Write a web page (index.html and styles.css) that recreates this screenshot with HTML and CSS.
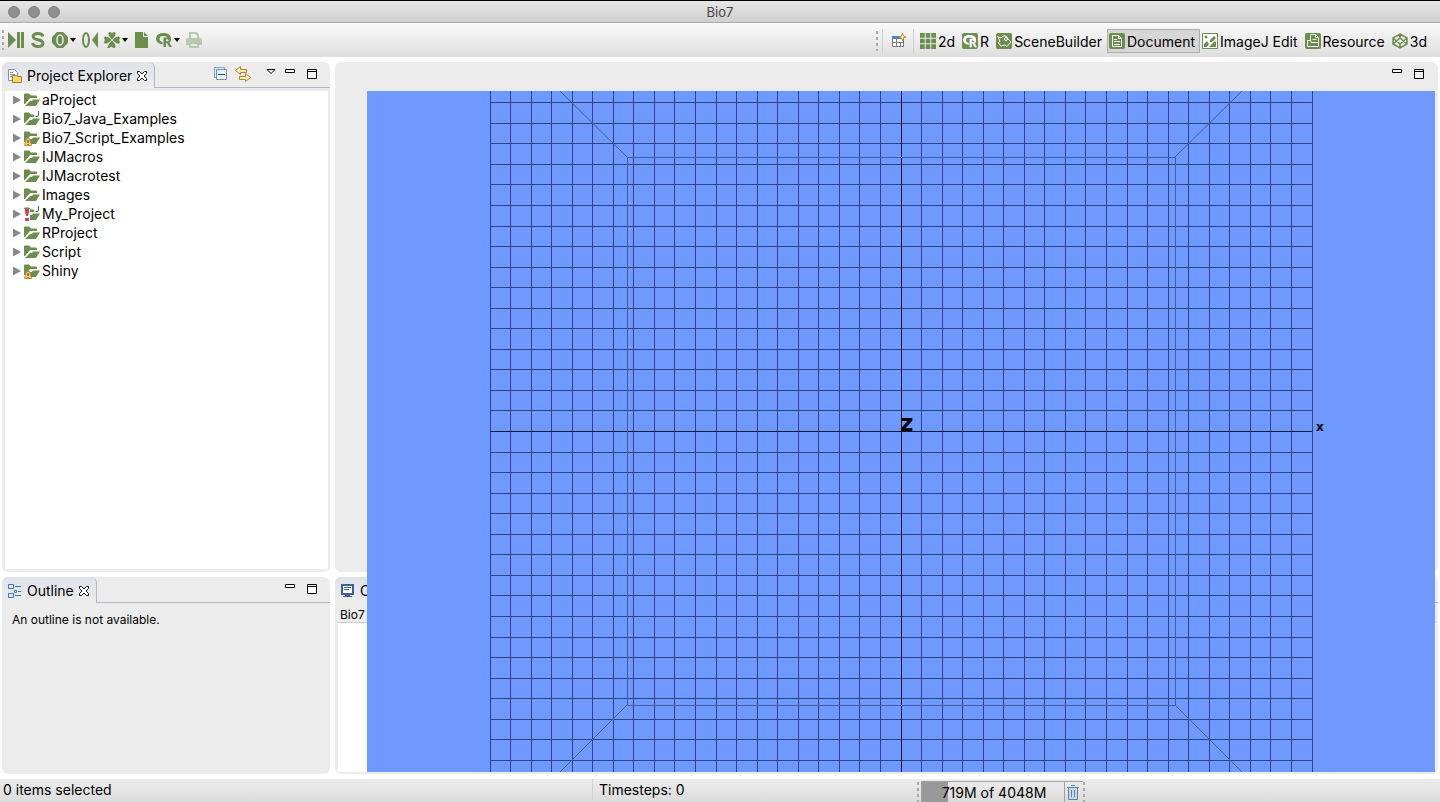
FILE: index.html
```
<!DOCTYPE html>
<html lang="en">
<head>
    <meta charset="UTF-8">
    <meta name="viewport" content="width=device-width, initial-scale=1.0">
    <title>Bio7</title>
    <link rel="stylesheet" href="styles.css">
</head>
<body>

    <!-- shared icons -->
    <svg class="sprite" aria-hidden="true">
        <symbol id="folder" viewBox="0 0 16 16">
            <path fill="#6b8e4e" d="M0 2.500q0-1 1-1h4l2 2h5q1 0 1 1V6H6L1 12H0z"/>
            <path fill="#6b8e4e" d="M1 14l5-5h2l1-1.500h7L12 14z"/>
        </symbol>
        <symbol id="twisty" viewBox="0 0 8 10">
            <path fill="#888" d="M0 .5L8 5 0 9.500z"/>
        </symbol>
        <symbol id="warn" viewBox="0 0 8 8">
            <path fill="#f8d080" stroke="#c98a2b" d="M2.500.5h3l2 7h-7z"/>
            <path stroke="#222" d="M4 2v3M4 6v1"/>
        </symbol>
        <symbol id="close" viewBox="0 0 12 12">
            <path fill="#fff" stroke="#111" d="M1.500 1.500h2L6 4l2.500-2.500h2v2L8 6l2.500 2.500v2h-2L6 8l-2.500 2.500h-2v-2L4 6 1.500 3.500z"/>
        </symbol>
        <symbol id="min" viewBox="0 0 12 12">
            <path fill="#fff" stroke="#000" d="M1.500 1.500h9v3h-9z"/>
        </symbol>
        <symbol id="max" viewBox="0 0 12 12">
            <path fill="#fff" stroke="#000" d="M1.500 1.500h9v9h-9zM1 3.500h10"/>
        </symbol>
        <symbol id="rlogo" viewBox="0 0 16 16">
            <path fill="currentColor" fill-rule="evenodd" d="M7.500 1C12 1 15 3.200 15 6.500c0 1-.3 1.800-.8 2.500L12 7.500c0-2-1.500-3.500-4.500-3.500S3.500 5.200 3.500 7c0 1.500 1 2.500 3 3v2.500C3 12 0 9.800 0 6.700 0 3.200 3 1 7.500 1z"/>
            <path fill="currentColor" fill-rule="evenodd" d="M7.500 5.500h4.500c2 0 3 1 3 2.600 0 1.300-.6 2-1.700 2.400L16 15h-2.800l-2.200-4h-1v4H7.500zM10 7.300v2h1.700q1 0 1-1t-1-1z"/>
        </symbol>
    </svg>

    <header class="titlebar">
        <div class="lights"><span></span><span></span><span></span></div>
        <h1>Bio7</h1>
    </header>

    <div class="toolbar">
        <div class="tools">
            <i class="grip"></i>
            <button class="tool" aria-label="Run"><svg viewBox="0 0 16 16"><path fill="currentColor" d="M0 0l8 8-8 8zM9 0h3v16H9zM13 0h3v16h-3z"/></svg></button>
            <button class="tool" aria-label="Setup"><svg viewBox="0 0 16 16"><path fill="none" stroke="currentColor" stroke-width="3" d="M13 4.500C12.500 2.500 11 1.500 8 1.500S3.200 2.800 3.200 4.500C3.200 9 13 6.500 13 11.200c0 2.200-2 3.300-5 3.300s-5-1.200-5.500-3.500"/></svg></button>
            <button class="tool" aria-label="Counter"><svg viewBox="0 0 16 16"><path fill="currentColor" d="M5 0h6l5 5v6l-5 5H5l-5-5V5z"/><ellipse cx="8" cy="8" rx="3" ry="5" fill="none" stroke="#eee" stroke-width="1.500"/></svg></button>
            <button class="drop" aria-label="Counter options"></button>
            <button class="tool" aria-label="Reset"><svg viewBox="0 0 16 16"><ellipse cx="4" cy="8" rx="3" ry="7" fill="none" stroke="currentColor" stroke-width="2"/><path fill="currentColor" d="M16 0v16l-6-8z"/></svg></button>
            <button class="tool" aria-label="Random"><svg viewBox="0 0 16 16"><g fill="currentColor"><path d="M8 7.500L5 4Q3.500 0 6 0q1.500 0 2 1.500Q8.500 0 10 0q2.500 0 1 4zM7.500 8L4 11Q0 12.500 0 10q0-1.500 1.500-2Q0 7.500 0 6q0-2.500 4-1zM8.500 8l3.500-3q4-1.500 4 1 0 1.500-1.500 2 1.500.5 1.500 2 0 2.500-4 1zM8 8.500l3 3.500q1.500 4-1 4-1.500 0-2-1.500L5 16H3l2-4z"/></g></svg></button>
            <button class="drop" aria-label="Random options"></button>
            <button class="tool" aria-label="New document"><svg viewBox="0 0 16 16"><path fill="currentColor" d="M1 0h8v5h5v11H1zM10 0l4 4h-4z"/></svg></button>
            <button class="tool" aria-label="R"><svg viewBox="0 0 16 16"><use href="#rlogo"/></svg></button>
            <button class="drop" aria-label="R options"></button>
            <button class="tool" aria-label="Print" disabled><svg viewBox="0 0 16 16"><path fill="none" stroke="currentColor" stroke-width="2" d="M4 7V1h6l2 2v4M4 11h8v4H4z"/><path fill="currentColor" d="M2 6h12q2 0 2 2v5h-3v-3H3v3H0V8q0-2 2-2z"/></svg></button>
        </div>

        <nav class="perspectives">
            <i class="grip"></i>
            <i class="divider"></i>
            <button class="open-persp" aria-label="Open perspective"><svg viewBox="0 0 16 16"><path fill="#fff" stroke="#777" d="M1.500 3.500h11v10h-11zM5.500 6v7M1.500 9.500h11M9.500 9.500v4"/><path fill="#4b83c4" d="M1 3h9v3H1z"/><path fill="#fff3c8" stroke="#b8862f" d="M11.500.5l1 2.500 2.500 1-2.500 1-1 2.500-1-2.500L8 4l2.500-1z"/></svg></button>
            <i class="divider"></i>
            <button class="persp"><svg viewBox="0 0 16 16"><path fill="currentColor" d="M0 0h4.700v4.700H0zM5.700 0h4.600v4.700H5.700zM11.300 0H16v4.700h-4.700zM0 5.700h4.700v4.600H0zM5.700 5.700h4.600v4.600H5.700zM11.300 5.700H16v4.600h-4.700zM0 11.300h4.700V16H0zM5.700 11.300h4.600V16H5.700zM11.300 11.300H16V16h-4.700z"/></svg>2d</button>
            <button class="persp"><svg viewBox="0 0 16 16"><rect width="16" height="16" rx="2" fill="currentColor"/><svg class="onGreen" x="1" y="1" width="14" height="14" viewBox="0 0 16 16"><use href="#rlogo"/></svg></svg>R</button>
            <button class="persp"><svg viewBox="0 0 16 16"><rect width="16" height="16" rx="2" fill="currentColor"/><path fill="none" stroke="#fff" d="M1.500 3.500L5 5l3-2.500L11 4l1 2 3 3-4 4.500-2-1.500-4 1-2.500-3L4 8z"/><circle cx="10" cy="6" r="1.500" fill="none" stroke="#fff"/></svg>SceneBuilder</button>
            <button class="persp active"><svg viewBox="0 0 16 16"><rect width="16" height="16" rx="2" fill="currentColor"/><path fill="none" stroke="#fff" d="M3.500 2.500h6l3 3v8h-9zM9.500 2.500v3h3M5 6.500h3M5 8.500h6M5 11.500h6"/></svg>Document</button>
            <button class="persp"><svg viewBox="0 0 16 16"><path fill="#fff" stroke="currentColor" d="M.5.5h15v15H.5z"/><path fill="currentColor" d="M2 14v-3l3-3 2 3-2 3zM7 14l6-6 1 1v5zM8 7l4-4 2 2-4 4H8z"/><circle cx="4" cy="4" r="1.500" fill="currentColor"/></svg>ImageJ Edit</button>
            <button class="persp"><svg viewBox="0 0 16 16"><rect width="16" height="16" rx="2" fill="currentColor"/><path fill="none" stroke="#dfe8d6" d="M5.500 7V1.500h5l3 3V9M10.500 1.500v3h3M7.500 6.500h4"/><path fill="none" stroke="#fff" d="M2.500 7.500h3l1 2h7v4h-11z"/></svg>Resource</button>
            <button class="persp"><svg viewBox="0 0 16 16"><path fill="none" stroke="currentColor" stroke-width="1.500" d="M8 1l7 4v6l-7 4-7-4V5zM8 1v4M8 11v4M1 5l7 6 7-6M1 11l7-6 7 6"/></svg>3d</button>
        </nav>
    </div>

    <main class="workbench">
        <section class="panel explorer">
            <div class="tabs">
                <h2 class="tab">
                    <svg class="icon" viewBox="0 0 16 16"><path fill="#fff" stroke="#8c9097" d="M1.500 1.500h6l3 3v8h-9z"/><path stroke="#6c95c7" d="M3 4.500h3M3 6.500h5M3 8.500h3"/><path fill="#fbd46b" stroke="#b27a25" d="M5.500 8.500v-1h4l1 1h4v6h-9z"/></svg>
                    Project Explorer
                    <button class="mini" aria-label="Close"><svg><use href="#close"/></svg></button>
                </h2>
                <div class="actions">
                    <button class="act" aria-label="Collapse all"><svg viewBox="0 0 16 16"><path fill="#dff0fb" stroke="#7ba1c9" d="M1.500 1.500h10v10h-10z"/><path fill="#e9f6fd" stroke="#7793ba" d="M3.500 3.500h10v10h-10z"/><path stroke="#1b4d86" d="M5 8.500h7"/></svg></button>
                    <button class="act link" aria-label="Link with editor"><svg viewBox="0 0 16 16"><path fill="#fff0bd" stroke="#b88327" d="M5.500.5l-5 4 5 4v-2h6v-3h-6zM10.500 7.500l5 4-5 4v-2h-6v-3h6z"/></svg></button>
                    <button class="mini menu" aria-label="View menu"><svg viewBox="0 0 12 12"><path fill="#fff" stroke="#000" d="M2 1.500h8L6 5.500z"/></svg></button>
                    <button class="mini" aria-label="Minimize"><svg><use href="#min"/></svg></button>
                    <button class="mini" aria-label="Maximize"><svg><use href="#max"/></svg></button>
                </div>
            </div>
            <ul class="tree" id="tree"></ul>
        </section>

        <section class="panel editor">
            <div class="tabs plain">
                <div class="actions">
                    <button class="mini" aria-label="Minimize"><svg><use href="#min"/></svg></button>
                    <button class="mini" aria-label="Maximize"><svg><use href="#max"/></svg></button>
                </div>
            </div>
        </section>

        <section class="panel outline">
            <div class="tabs">
                <h2 class="tab">
                    <svg class="icon" viewBox="0 0 16 16"><path fill="#dbe9f8" stroke="#3d77bb" d="M1.500 1.500h5v4h-5zM1.500 10.500h5v4h-5z"/><path fill="none" stroke="#3d77bb" d="M8 3.500h6M8 12.500h6M11 8.500h3M7.500 7.500h2v2h-2z"/></svg>
                    Outline
                    <button class="mini" aria-label="Close"><svg><use href="#close"/></svg></button>
                </h2>
                <div class="actions">
                    <button class="mini" aria-label="Minimize"><svg><use href="#min"/></svg></button>
                    <button class="mini" aria-label="Maximize"><svg><use href="#max"/></svg></button>
                </div>
            </div>
            <p class="message">An outline is not available.</p>
        </section>

        <section class="panel console">
            <div class="tabs">
                <h2 class="tab">
                    <svg class="icon" viewBox="0 0 16 16"><path fill="#fff" stroke="#3f5f9c" stroke-width="2" d="M2 2h11v9H2z"/><path stroke="#3f5f9c" d="M4 4.500h7M4 6.500h5"/><path fill="#3f5f9c" d="M5 12h5v1h2v1H3v-1h2z"/></svg>
                    Console
                </h2>
            </div>
            <p class="console-name">Bio7</p>
            <div class="console-text"></div>
        </section>

        <!-- the 3d view floats above the editor and the console -->
        <svg class="space" id="space" viewBox="0 0 1068 681" preserveAspectRatio="xMidYMid slice" role="img" aria-label="3d space">
            <g class="grid" id="grid"></g>
            <g class="box">
                <path d="M260.500 66.500h548v548h-548z"/>
                <path d="M193 0l67 66M875 0l-67 66M193 681l67-67M875 681l-67-67"/>
            </g>
            <path class="axis" d="M534 340.500h411"/>
            <text class="z" x="533" y="340">z</text>
            <text class="x" x="949" y="340">x</text>
        </svg>
    </main>

    <footer class="statusbar">
        <span class="selection">0 items selected</span>
        <span class="steps">Timesteps: 0</span>
        <div class="heap">
            <i class="grip"></i>
            <span class="memory">719M of 4048M</span>
            <button class="gc" aria-label="Run garbage collector"><svg viewBox="0 0 16 16"><path fill="#c9d8e8" stroke="#5f7fa5" d="M3.500 3.500h9v12h-9zM2 3.500h12M6 1.500h4M6.500 6v7M9.500 6v7"/></svg></button>
            <i class="grip"></i>
        </div>
    </footer>

    <script>
        const projects = [
            { name: 'aProject' },
            { name: 'Bio7_Java_Examples', java: true },
            { name: 'Bio7_Script_Examples', warn: true },
            { name: 'IJMacros' },
            { name: 'IJMacrotest' },
            { name: 'Images' },
            { name: 'My_Project', java: true, error: true },
            { name: 'RProject' },
            { name: 'Script' },
            { name: 'Shiny', warn: true }
        ];

        document.getElementById('tree').innerHTML = projects.map(function (p) {
            let marks = '';
            if (p.java) marks += '<path fill="#fff" d="M10 0h6v6h-6z"/><path fill="none" stroke="#3e6796" d="M14.500 0v4q0 2-3 1.500"/>';
            if (p.warn) marks += '<use href="#warn" x="0" y="8" width="8" height="8"/>';
            if (p.error) marks += '<path fill="#fff" d="M0 3h6v13H0z"/><path fill="#d8424a" d="M1 3h4v3l-1 4H2L1 6zM1 12h4v3H1z"/>';
            return '<li><button class="twisty" aria-label="Expand ' + p.name + '"><svg><use href="#twisty"/></svg></button>' +
                '<svg class="icon" viewBox="0 0 16 16"><use href="#folder"/>' + marks + '</svg>' + p.name + '</li>';
        }).join('');

        // 40 x 40 cells, centred on the axes
        const cell = 822 / 40;
        let d = '';
        for (let i = -20; i <= 20; i++) {
            const x = Math.floor(534 + i * cell) + 0.5;
            const y = Math.round(340 + i * cell) + 0.5;
            d += 'M' + x + ' 0v681';
            if (y > 0 && y < 681) d += 'M123 ' + y + 'h822';
        }
        document.getElementById('grid').innerHTML = '<path d="' + d + '"/><path class="axis" d="M534.500 0v681M123 340.500h411"/>';
    </script>

</body>
</html>
```

FILE: styles.css
```
* {
    box-sizing: border-box;
}

body {
    margin: 0;
    height: 100vh;
    display: flex;
    flex-direction: column;
    background-color: #fff;
    color: #000;
    font-family: Inter, "Liberation Sans", sans-serif;
    font-size: 14px;
    line-height: 19px;
    overflow: hidden;
}

h1, h2, p, ul {
    margin: 0;
    padding: 0;
    font-size: 14px;
    font-weight: normal;
}

button {
    border: none;
    padding: 0;
    background: none;
    color: inherit;
    font: inherit;
    display: flex;
    align-items: center;
}

svg {
    display: block;
    flex: none;
}

.sprite {
    position: absolute;
    width: 0;
    height: 0;
}

.icon {
    width: 16px;
    height: 16px;
}

.grip {
    width: 2px;
    height: 20px;
    background: repeating-linear-gradient(#aaa 0 3px, transparent 3px 6px);
}

/* title bar */
.titlebar {
    height: 23px;
    flex: none;
    display: grid;
    grid-template-columns: 1fr auto 1fr;
    align-items: center;
    padding: 1px 8px 0;
    border-top: 1px solid #000;
    border-bottom: 1px solid #aaa;
    background: linear-gradient(#e6e6e6, #cfcfcf);
}

.titlebar h1 {
    font-size: 13px;
    color: #444;
}

.lights {
    display: flex;
    gap: 8px;
}

.lights span {
    width: 12px;
    height: 12px;
    border-radius: 50%;
    border: 1px solid #828285;
    background-color: #8f8f93;
}

/* toolbar */
.toolbar {
    height: 34px;
    flex: none;
    display: flex;
    align-items: center;
    justify-content: space-between;
    padding: 0 8px 0 2px;
    background: linear-gradient(#fafafa, #dedede);
}

.tools, .perspectives {
    display: flex;
    align-items: center;
}

.tools {
    color: #6b8e4e;
}

.tools .grip {
    margin-right: 4px;
}

.tool {
    margin-right: 6px;
}

.tool svg, .persp svg, .open-persp svg {
    width: 16px;
    height: 16px;
}

.tool:has(+ .drop) {
    margin-right: 2px;
}

.tool:disabled {
    color: #b9c8ac;
}

.drop {
    margin-right: 6px;
    border: 3px solid transparent;
    border-top: 4px solid #000;
    border-bottom: none;
}

.perspectives {
    height: 34px;
    padding-top: 2px;
}

.divider {
    width: 1px;
    height: 24px;
    margin: 0 4px;
    background-color: #d0d0d0;
}

.open-persp {
    margin: 0 2px 0 4px;
}

.persp {
    height: 24px;
    padding: 0 4px 0 1px;
    gap: 2px;
    border: 1px solid transparent;
}

.persp > svg {
    color: #6b8e4e;
}

.persp .onGreen {
    width: 14px;
    height: 14px;
    color: #fff;
}

.persp.active {
    background-color: #d6d6d6;
    border-color: #adadad;
}

/* panels */
.workbench {
    position: relative;
    flex: 1;
    min-height: 0;
    display: grid;
    grid-template-columns: 328px 1fr;
    grid-template-rows: 1fr 197px;
    gap: 5px;
    padding: 5px 2px;
}

.panel {
    display: flex;
    flex-direction: column;
    min-width: 0;
    min-height: 0;
    padding: 0 2px 2px;
    border-radius: 6px;
    background-color: #ececec;
}

.tabs {
    height: 26px;
    flex: none;
    display: flex;
    justify-content: space-between;
    margin: 0 -2px;
    border-bottom: 1px solid #b1b6c8;
}

.tabs.plain {
    border-bottom: none;
    justify-content: flex-end;
}

.tabs.plain .actions {
    padding-right: 13px;
}

.tab {
    height: 26px;
    display: flex;
    align-items: center;
    gap: 4px;
    padding: 1px 6px 0 5px;
    border-right: 1px solid #b1b6c8;
    border-radius: 6px 6px 0 0;
    background: linear-gradient(#dfe2ea, #ececec);
}

.mini svg {
    width: 12px;
    height: 12px;
}

.act svg {
    width: 16px;
    height: 16px;
}

.actions {
    height: 24px;
    display: flex;
    align-items: center;
    gap: 10px;
    padding-right: 12px;
}

.act + .act {
    margin-left: -4px;
}

.link {
    margin-right: 4px;
}

.menu {
    margin-right: -3px;
}

.tree {
    flex: 1;
    margin: 3px 0 0;
    list-style: none;
    background-color: #fff;
}

.explorer {
    padding: 0 2px 3px 3px;
}

.explorer .tabs {
    margin-left: -3px;
}

.tree li {
    display: flex;
    align-items: center;
    gap: 2px;
    height: 19px;
    padding: 0 0 2px 8px;
}

.twisty svg {
    width: 8px;
    height: 10px;
    margin-right: 1px;
}

.message {
    padding: 7px 8px;
    font-size: 12px;
}

.console {
    padding-left: 3px;
}

.console .tabs {
    margin-left: -3px;
}

.console-name {
    padding: 2px;
    height: 20px;
    line-height: 19px;
    font-size: 12px;
    border-bottom: 1px solid #ccc;
}

.console-text {
    flex: 1;
    background-color: #fff;
}

/* 3d view */
.space {
    position: absolute;
    top: 34px;
    left: 367px;
    width: calc(100% - 372px);
    height: calc(100% - 41px);
    background-color: #6f99ff;
}

.space path {
    fill: none;
    stroke-width: 1px;
}

.grid path {
    stroke: #2d4382;
}

.box path {
    stroke: #3f5ea6;
}

.space .axis {
    stroke: #0e1a38;
}

.space text {
    font-family: "DejaVu Sans", sans-serif;
    font-weight: bold;
}

.space .z {
    font-size: 23px;
}

.space .x {
    font-size: 12px;
}

/* status bar */
.statusbar {
    height: 23px;
    flex: none;
    display: grid;
    grid-template-columns: 592px 325px 1fr;
    background: linear-gradient(#ececec, #dcdcdc);
    line-height: 22px;
}

.selection {
    padding-left: 3px;
}

.steps {
    padding-left: 6px;
    border-left: 1px solid #d2d2d2;
}

.heap {
    display: flex;
    align-items: center;
    padding-top: 2px;
}

.heap .grip {
    margin-right: 2px;
}

.memory {
    width: 144px;
    height: 21px;
    padding-left: 2px;
    text-align: center;
    border: 1px solid #a0a0a0;
    border-bottom: none;
    background: linear-gradient(to right, #999 18%, transparent 18%);
}

.gc {
    height: 21px;
    padding-right: 2px;
    border-top: 1px solid #a0a0a0;
}

.gc svg {
    width: 16px;
    height: 16px;
}
```
